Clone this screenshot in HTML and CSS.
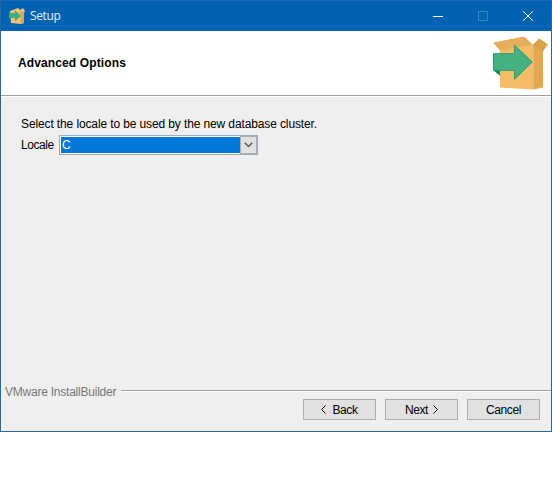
FILE: index.html
```html
<!DOCTYPE html>
<html lang="en">
<head>
<meta charset="utf-8">
<title>Setup</title>
<link rel="stylesheet" href="styles.css">
</head>
<body>
<svg width="0" height="0" class="defs">
  <symbol id="box" viewBox="0 0 56 54">
    <path fill="#f5bd67" d="M7 13 41 9V54L7 52Z"/>
    <path fill="#e3a850" d="M41 9 51 13V52L41 54Z"/>
    <path fill="#e6ae5b" d="M0 6 32 0 41 9 7 14Z"/>
    <path fill="#d8a14b" d="M40 9 47 2 56 8 51 15Z"/>
    <path fill="#138158" d="M0 34H7V40Z"/>
    <path fill="#47b080" stroke="#20a071" d="M.5 17.500H22V9L40 26 22 43.500V34.500H.5Z"/>
  </symbol>
  <symbol id="small-box" viewBox="0 0 16 16">
    <path fill="#efc276" d="M1 3 9 0 11 2 14 0 16 3 15 5V15L12 16 2 15Z"/>
    <path fill="#d6a75a" d="M11 3 15 4V15L12 16Z"/>
    <path fill="#42aa7c" d="M0 5H6V2L12 8 6 13V10H0Z"/>
  </symbol>
</svg>
<div class="window">
  <header class="titlebar">
    <svg class="app-icon"><use href="#small-box"/></svg>
    <span class="title">Setup</span>
    <div class="controls">
      <svg viewBox="0 0 10 10"><path d="M0 5.500H10"/></svg>
      <svg class="off" viewBox="0 0 10 10"><path d="M.5 .5H9.500V9.500H.5Z"/></svg>
      <svg viewBox="0 0 10 10"><path d="M.3 .3 9.700 9.700M9.700 .3 .3 9.700"/></svg>
    </div>
  </header>
  <section class="banner">
    <h1>Advanced Options</h1>
    <svg class="logo"><use href="#box"/></svg>
  </section>
  <main>
    <p>Select the locale to be used by the new database cluster.</p>
    <div class="field">
      <label>Locale</label>
      <div class="combo">
        <span class="value">C</span>
        <span class="arrow"><svg viewBox="0 0 9 6"><path d="M.8 .8 4.500 4.500 8.200 .8"/></svg></span>
      </div>
    </div>
  </main>
  <footer>
    <div class="brand"><span>VMware InstallBuilder</span><i></i></div>
    <div class="buttons">
      <button class="back"><svg viewBox="0 0 5 9"><path d="M4.500 .5.5 4.500 4.500 8.500"/></svg><span>Back</span></button>
      <button class="next"><span>Next</span><svg viewBox="0 0 5 9"><path d="M.5 .5 4.500 4.500.5 8.500"/></svg></button>
      <button class="cancel"><span>Cancel</span></button>
    </div>
  </footer>
</div>
</body>
</html>
```
FILE: styles.css
```css
* { box-sizing: border-box; }
body { margin: 0; background: #fff; font: 12px/16px "Liberation Sans", sans-serif; color: #000; }
.defs { display: block; }
.window { width: 552px; height: 432px; border: 1px solid #27699f; border-top-color: #1a6cb5; background: #efefef; display: flex; flex-direction: column; }
.titlebar { height: 30px; background: #0063b1; color: #fff; display: flex; align-items: center; padding-left: 8px; flex: none; }
.app-icon { width: 16px; height: 16px; }
.title { font: 12px/16px "Open Sans", sans-serif; margin-left: 5px; letter-spacing: -0.35px; color: #e4eef7; }
.controls { display: flex; margin-left: auto; gap: 35px; padding-right: 18px; }
.controls svg { width: 10px; height: 10px; fill: none; stroke: #fff; }
.controls .off { stroke: #3488c9; }
.banner { height: 65px; background: #fff; border-bottom: 1px solid #a0a0a0; display: flex; align-items: center; justify-content: space-between; padding: 0 3px 0 17px; flex: none; box-shadow: 0 1px #fff; }
h1 { font-size: 12px; line-height: 16px; margin: 0; letter-spacing: 0.12px; }
.logo { width: 55px; height: 54px; }
main { flex: 1; padding: 20px 0 0 20px; }
p { margin: 0; letter-spacing: -0.12px; }
.field { display: flex; align-items: center; margin-top: 3px; }
.field label { width: 38px; letter-spacing: -0.45px; }
.combo { width: 199px; height: 20px; border: 1px solid #9eacb8; outline: 1px solid #fff; outline-offset: -2px; padding: 1px 0 1px 1px; display: flex; }
.value { flex: 1; background: #0078d7; color: #fff; line-height: 16px; padding-left: 1px; height: 16px; }
.arrow { width: 17px; margin: -1px 0; border: 1px solid #adadad; background: #e1e1e1; display: flex; align-items: center; justify-content: center; position: relative; z-index: 1; }
.arrow svg { width: 9px; height: 6px; fill: none; stroke: #555; stroke-width: 1.400; }
footer { height: 48px; flex: none; }
.brand { display: flex; height: 16px; align-items: center; padding-left: 4px; color: #777; }
.brand span { width: 112px; flex: none; letter-spacing: -0.23px; white-space: nowrap; padding-top: 2px; }
.brand i { flex: 1; height: 2px; margin-left: 4px; border-top: 1px solid #a0a0a0; border-bottom: 1px solid #fff; }
.buttons { display: flex; justify-content: flex-end; gap: 9px; padding-right: 11px; }
button { width: 73px; height: 21px; border: 1px solid #adadad; background: #e1e1e1; padding: 0; font: inherit; letter-spacing: -0.4px; display: flex; align-items: center; justify-content: center; gap: 6px; }
button svg { width: 5px; height: 9px; fill: none; stroke: #000; }
.next { gap: 5px; }
```
